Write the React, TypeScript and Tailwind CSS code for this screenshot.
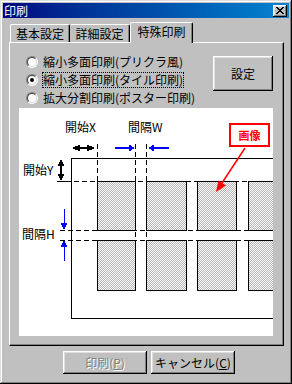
const raised =
  "shadow-[inset_-1px_-1px_#000,inset_1px_1px_#fff,inset_-2px_-2px_#808080,inset_2px_2px_#dfdfdf]";

const Radio = ({ label, checked, focus }: { label: string; checked?: boolean; focus?: boolean }) => (
  <div className="flex items-center h-[18px]">
    <span className="w-[12px] h-[12px] rounded-full border border-t-[#808080] border-l-[#808080] border-r-white border-b-white">
      <span className="w-full h-full rounded-full bg-white border border-t-[#404040] border-l-[#404040] border-r-[#dfdfdf] border-b-[#dfdfdf] flex items-center justify-center">
        {checked && <span className="w-[4px] h-[4px] rounded-full bg-black" />}
      </span>
    </span>
    <span
      className={
        "ml-[4px] px-[1px] h-[16px] flex items-center text-[12px] leading-none " +
        (focus ? "outline outline-1 outline-dotted outline-black -outline-offset-1" : "")
      }
    >
      {label}
    </span>
  </div>
);

const Diagram = () => {
  const tilesX: [number, number][] = [
    [97, 38],
    [146, 40],
    [197, 39],
    [248, 40],
  ];
  const tilesY: [number, number][] = [
    [180, 49],
    [239, 50],
  ];
  return (
    <svg width="254" height="228" viewBox="19 107 254 228" className="block" shapeRendering="crispEdges">
      <defs>
        <pattern id="dots" width="2" height="2" patternUnits="userSpaceOnUse">
          <rect width="2" height="2" fill="#fff" />
          <rect width="1" height="1" fill="#b4b4b4" />
          <rect x="1" y="1" width="1" height="1" fill="#b4b4b4" />
        </pattern>
      </defs>
      <rect x="19" y="107" width="254" height="228" fill="#fff" />

      {/* paper */}
      <path d="M273 157.5H71.5V317.5H273" fill="none" stroke="#000" />

      {/* guide lines */}
      <g stroke="#000" strokeDasharray="5 3" fill="none">
        <path d="M58 180.5H273" />
        <path d="M60 229.5H273" />
        <path d="M60 239.5H273" />
        <path d="M97.5 143V180" />
        <path d="M135.5 143V239" />
        <path d="M146.5 143V239" />
      </g>

      {/* tiles */}
      {tilesY.map(([y, h]) =>
        tilesX.map(([x, w]) => (
          <rect key={x + "-" + y} x={x + 0.5} y={y + 0.5} width={w} height={h} fill="url(#dots)" stroke="#000" />
        ))
      )}

      {/* black arrows */}
      <g fill="#000" stroke="none">
        <polygon points="72,147 80,143.5 80,150.5" />
        <rect x="79" y="146" width="10" height="2" />
        <polygon points="95,147 87,143.5 87,150.5" />
        <polygon points="61,158 57.5,165 64.5,165" />
        <rect x="60" y="164" width="2" height="10" />
        <polygon points="61,180 57.5,173 64.5,173" />
        <rect x="57" y="180" width="9" height="1" />
      </g>

      {/* blue arrows */}
      <g fill="#0000ff" stroke="none">
        <rect x="115" y="146" width="15" height="1.5" />
        <polygon points="135,147 129,143.5 129,150.5" />
        <polygon points="148,147 154,143.5 154,150.5" />
        <rect x="154" y="146" width="15" height="1.5" />
        <rect x="63.5" y="208" width="1.5" height="15" />
        <polygon points="64,229 60.5,222 67.5,222" />
        <polygon points="64,239 60.5,246 67.5,246" />
        <rect x="63.5" y="245" width="1.5" height="15" />
      </g>

      {/* labels */}
      <g fontFamily="'Noto Sans CJK JP', sans-serif" fontSize="12" fill="#000" shapeRendering="auto">
        <text x="65" y="131">開始X</text>
        <text x="128" y="131">間隔W</text>
        <text x="23" y="174">開始Y</text>
        <text x="22" y="238">間隔H</text>
      </g>

      {/* image callout */}
      <rect x="230" y="123" width="39" height="22" fill="#fff" stroke="#ff0000" strokeWidth="2" />
      <text
        x="249.5"
        y="138.5"
        textAnchor="middle"
        fontFamily="'Noto Sans CJK JP', sans-serif"
        fontSize="11"
        fontWeight="bold"
        fill="#ff0000"
        shapeRendering="auto"
      >
        画像
      </text>
      <g shapeRendering="auto">
        <line x1="245" y1="147" x2="222" y2="182" stroke="#ff0000" strokeWidth="1.5" />
        <polygon points="216,191 226,184.5 218.5,179.5" fill="#ff0000" />
      </g>
    </svg>
  );
};

export default function App() {
  return (
    <div
      className="w-[292px] h-[384px] bg-[#c0c0c0] p-[3px] text-black font-['Noto_Sans_CJK_JP',sans-serif] shadow-[inset_-1px_-1px_#000,inset_1px_1px_#dfdfdf,inset_-2px_-2px_#808080,inset_2px_2px_#fff]"
    >
      {/* title bar */}
      <div className="h-[15px] flex items-center justify-between bg-gradient-to-r from-[#000080] to-[#1084d0]">
        <span className="pl-[1px] text-white text-[12px] leading-none">印刷</span>
        <button className={"w-[14px] h-[12px] mr-[2px] bg-[#c0c0c0] flex items-center justify-center " + raised}>
          <svg width="8" height="7" viewBox="0 0 8 7" shapeRendering="crispEdges">
            <path d="M0 0h2v1h1v1h2V1h1V0h2v1H7v1H6v1H5v1h1v1h1v1h1v1H6V6H5V5H3v1H2v1H0V6h1V5h1V4h1V3H2V2H1V1H0z" fill="#000" />
          </svg>
        </button>
      </div>

      {/* tabs */}
      <div className="mt-[4px] h-[20px] pl-[7px] flex items-end relative z-10">
        <div className="w-[60px] h-[18px] border-l border-t border-white border-r border-r-black rounded-t-[2px] shadow-[inset_-1px_0_#808080] flex items-center justify-center text-[12px] leading-none">
          基本設定
        </div>
        <div className="w-[60px] h-[18px] border-t border-white border-r border-r-black rounded-t-[2px] shadow-[inset_-1px_0_#808080] flex items-center justify-center text-[12px] leading-none">
          詳細設定
        </div>
        <div className="w-[63px] h-[21px] -mb-[1px] bg-[#c0c0c0] border-l border-t border-white border-r border-r-black rounded-t-[2px] shadow-[inset_-1px_0_#808080] flex items-start pt-[3px] justify-center text-[12px] leading-none">
          特殊印刷
        </div>
      </div>

      {/* panel */}
      <div className="ml-[6px] w-[275px] h-[304px] border-l border-t border-white border-r border-b border-r-black border-b-black shadow-[inset_-1px_-1px_#808080]">
        <div className="pl-[9px] pt-[9px]">
          <div className="w-[254px] flex justify-between items-start">
            <div className="pl-[7px] pt-[1px]">
              <Radio label="縮小多面印刷(プリクラ風)" />
              <Radio label="縮小多面印刷(タイル印刷)" checked focus />
              <Radio label="拡大分割印刷(ポスター印刷)" />
            </div>
            <button className={"mt-[4px] w-[60px] h-[35px] text-[12px] leading-none flex items-center justify-center " + raised}>
              設定
            </button>
          </div>
          <div className="mt-[1px]">
            <Diagram />
          </div>
        </div>
      </div>

      {/* buttons */}
      <div className="mt-[5px] ml-[60px] flex gap-[4px]">
        <button
          disabled
          className={"w-[84px] h-[23px] text-[12px] leading-none text-[#808080] [text-shadow:1px_1px_#fff] flex items-center justify-center " + raised}
        >
          印刷(<span className="underline">P</span>)
        </button>
        <button className={"w-[84px] h-[23px] text-[12px] leading-none flex items-center justify-center " + raised}>
          キャンセル(<span className="underline">C</span>)
        </button>
      </div>
    </div>
  );
}
